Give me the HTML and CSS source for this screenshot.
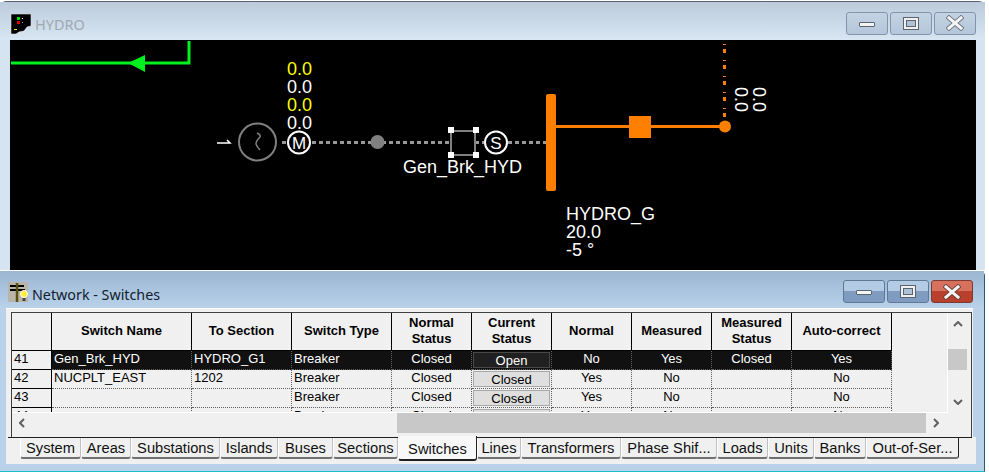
FILE: index.html
```html
<!DOCTYPE html>
<html>

<head>
<title>HYDRO - Network Switches</title>
<link rel="stylesheet" href="styles.css">
</head>

<body>

<!-- one-line window on top: the one line diagram -->
<div class="window diagram-window">
  <div class="title-bar">
    <svg class="title-icon" width="20" height="20" viewBox="0 0 20 20">
      <path d="M0 0H20V12L16 13L13 17L8 18L5 20H0Z" fill="#000" stroke="#fff" stroke-width="0.5"/>
      <rect x="6" y="3" width="3" height="3" fill="#00e000"/>
      <rect x="6" y="7" width="3" height="3" fill="#e00000"/>
      <rect x="11" y="4" width="1" height="1" fill="#fff"/>
      <rect x="11" y="8" width="1" height="1" fill="#888"/>
      <rect x="3" y="15" width="3" height="1" fill="#ffe000"/>
    </svg>
    <span class="title-text title-inactive">HYDRO</span>
    <div class="win-buttons">
      <div class="win-btn"><span class="glyph-min"></span></div>
      <div class="win-btn"><span class="glyph-max"></span></div>
      <div class="win-btn">
        <svg width="18" height="16" viewBox="0 0 18 16"><path d="M2 2L16 14M16 2L2 14" stroke="#6a7480" stroke-width="5.500" stroke-linecap="square" transform="translate(9 8) scale(0.86) translate(-9 -8)"/><path d="M2 2L16 14M16 2L2 14" stroke="#f4f4f4" stroke-width="3.500" stroke-linecap="square" transform="translate(9 8) scale(0.86) translate(-9 -8)"/></svg>
      </div>
    </div>
  </div>
  <svg class="diagram" width="966" height="230" viewBox="10 40 966 230">
    <!-- green feeder -->
    <path d="M11 63H189V41" fill="none" stroke="#00f020" stroke-width="3"/>
    <polygon points="128,63 145,55 145,72" fill="#00f020"/>

    <!-- generator line -->
    <path d="M217 143H230L227 140" fill="none" stroke="#fff" stroke-width="1.500"/>
    <circle cx="257.500" cy="142" r="18.500" fill="none" stroke="#808080" stroke-width="2"/>
    <path d="M257 133Q261 135 260 137Q256 141 256 144Q257 147 260 150" fill="none" stroke="#808080" stroke-width="1.500"/>
    <path d="M282 142.500H288M312 142.500H450M475 142.500H484M508 142.500H546" stroke="#989898" stroke-width="3" stroke-dasharray="4 3" fill="none"/>
    <circle cx="377.500" cy="142" r="7" fill="#808080"/>

    <circle cx="299" cy="142.500" r="11" fill="#000" stroke="#fff" stroke-width="2"/>
    <text class="sym" x="299" y="148.500">M</text>

    <!-- breaker and handles -->
    <rect x="451" y="131" width="24" height="24" fill="#000" stroke="#808080" stroke-width="2"/>
    <rect x="448" y="127" width="6" height="6" fill="#fff"/>
    <rect x="473" y="127" width="6" height="6" fill="#fff"/>
    <rect x="448" y="152" width="6" height="6" fill="#fff"/>
    <rect x="473" y="152" width="6" height="6" fill="#fff"/>

    <circle cx="496" cy="142.500" r="11" fill="#000" stroke="#fff" stroke-width="2"/>
    <text class="sym" x="496" y="148.500">S</text>

    <!-- orange bus -->
    <rect x="546" y="94" width="10" height="97" rx="2" fill="#ff8000"/>
    <path d="M556 126.500H725" stroke="#ff8000" stroke-width="3"/>
    <rect x="629" y="116" width="22" height="22" fill="#ff8000"/>
    <circle cx="725" cy="126.500" r="6" fill="#ff8000"/>
    <path d="M724.500 49V125" stroke="#ff8000" stroke-width="3" stroke-dasharray="4 12"/>
    <path d="M724.500 44V110" stroke="#ff8000" stroke-width="3" stroke-dasharray="1 15"/>

    <text class="dia-text yellow" x="287" y="75">0.0</text>
    <text class="dia-text" x="287" y="93">0.0</text>
    <text class="dia-text yellow" x="287" y="111">0.0</text>
    <text class="dia-text" x="287" y="129">0.0</text>

    <text class="dia-text" transform="translate(735 87) rotate(90)">0.0</text>
    <text class="dia-text" transform="translate(753 87) rotate(90)">0.0</text>

    <text class="dia-text" x="403" y="173">Gen_Brk_HYD</text>
    <text class="dia-text" x="566" y="220">HYDRO_G</text>
    <text class="dia-text" x="566" y="238">20.0</text>
    <text class="dia-text" x="566" y="256">-5 °</text>
  </svg>
</div>

<div class="window switches-window">
  <div class="title-bar">
    <svg class="title-icon" width="20" height="20" viewBox="0 0 20 20">
      <rect width="20" height="20" fill="#b8b4a8"/>
      <path d="M2 4H16M2 8H17" stroke="#000" stroke-width="2"/>
      <path d="M9 1V20" stroke="#5c5010" stroke-width="2.500"/>
      <circle cx="16" cy="12" r="3.500" fill="#ffee33" stroke="#fff"/>
      <rect x="14.500" y="16" width="3" height="3" fill="#444"/>
    </svg>
    <span class="title-text title-network">Network - Switches</span>
    <div class="win-buttons">
      <div class="win-btn"><span class="glyph-min"></span></div>
      <div class="win-btn"><span class="glyph-max"></span></div>
      <div class="win-btn win-close">
        <svg width="18" height="16" viewBox="0 0 18 16"><path d="M2 2L16 14M16 2L2 14" stroke="#6a4038" stroke-width="5.500" stroke-linecap="square" transform="translate(9 8) scale(0.86) translate(-9 -8)"/><path d="M2 2L16 14M16 2L2 14" stroke="#f4f4f4" stroke-width="3.500" stroke-linecap="square" transform="translate(9 8) scale(0.86) translate(-9 -8)"/></svg>
      </div>
    </div>
  </div>

  <div class="panel">
    <div class="grid-section">
      <div class="grid-frame">
        <div class="grid-row">
          <div class="grid-view">
            <table class="grid">
              <colgroup>
                <col class="c-40"><col class="c-140"><col class="c-100"><col class="c-100"><col class="c-80">
                <col class="c-80"><col class="c-80"><col class="c-80"><col class="c-80"><col class="c-100">
              </colgroup>
              <tr class="head">
                <th></th>
                <th>Switch Name</th>
                <th>To Section</th>
                <th>Switch Type</th>
                <th>Normal<br>Status</th>
                <th>Current<br>Status</th>
                <th>Normal</th>
                <th>Measured</th>
                <th>Measured<br>Status</th>
                <th>Auto-correct</th>
              </tr>
              <tr class="selected">
                <td class="row-num">41</td><td>Gen_Brk_HYD</td><td>HYDRO_G1</td><td>Breaker</td>
                <td class="mid">Closed</td><td class="btn-cell"><div class="cell-btn">Open</div></td>
                <td class="mid">No</td><td class="mid">Yes</td><td class="mid">Closed</td><td class="mid">Yes</td>
              </tr>
              <tr>
                <td class="row-num">42</td><td>NUCPLT_EAST</td><td>1202</td><td>Breaker</td>
                <td class="mid">Closed</td><td class="btn-cell"><div class="cell-btn">Closed</div></td>
                <td class="mid">Yes</td><td class="mid">No</td><td class="mid"></td><td class="mid">No</td>
              </tr>
              <tr>
                <td class="row-num">43</td><td></td><td></td><td>Breaker</td>
                <td class="mid">Closed</td><td class="btn-cell"><div class="cell-btn">Closed</div></td>
                <td class="mid">Yes</td><td class="mid">No</td><td class="mid"></td><td class="mid">No</td>
              </tr>
              <tr>
                <td class="row-num">44</td><td></td><td></td><td>Breaker</td>
                <td class="mid">Closed</td><td class="btn-cell"><div class="cell-btn">Closed</div></td>
                <td class="mid">Yes</td><td class="mid">No</td><td class="mid"></td><td class="mid">No</td>
              </tr>
            </table>
          </div>
          <div class="v-scroll">
            <svg width="10" height="6" viewBox="0 0 10 6"><path d="M1 5L5 1L9 5" fill="none" stroke="#606060" stroke-width="2"/></svg>
            <div class="v-thumb"></div>
            <svg width="10" height="6" viewBox="0 0 10 6"><path d="M1 1L5 5L9 1" fill="none" stroke="#606060" stroke-width="2"/></svg>
          </div>
        </div>
        <div class="h-scroll">
          <svg width="6" height="10" viewBox="0 0 6 10"><path d="M5 1L1 5L5 9" fill="none" stroke="#606060" stroke-width="2"/></svg>
          <div class="h-thumb"></div>
          <svg width="6" height="10" viewBox="0 0 6 10"><path d="M1 1L5 5L1 9" fill="none" stroke="#606060" stroke-width="2"/></svg>
        </div>
      </div>
    </div>

    <div class="tabs">
      <div class="tab t-61">System</div>
      <div class="tab t-50">Areas</div>
      <div class="tab t-89">Substations</div>
      <div class="tab t-58">Islands</div>
      <div class="tab t-55">Buses</div>
      <div class="tab t-65">Sections</div>
      <div class="tab tab-active t-79">Switches</div>
      <div class="tab t-44">Lines</div>
      <div class="tab t-100">Transformers</div>
      <div class="tab t-96">Phase Shif...</div>
      <div class="tab t-51">Loads</div>
      <div class="tab t-46">Units</div>
      <div class="tab t-52">Banks</div>
      <div class="tab t-93">Out-of-Ser...</div>
    </div>
  </div>
</div>

</body>

</html>
```

FILE: styles.css
```css
html, body {
	margin: 0;
	height: 100%;
}

body {
	position: relative;
	width: 989px;
	height: 475px;
	overflow: hidden;
	background: #fff;
	font-family: "Liberation Sans", Arial, sans-serif;
}

/* windows sit on a desktop, so these two are placed */
.window {
	position: absolute;
	left: 0;
	width: 985px;
	box-sizing: border-box;
	border-radius: 6px 6px 0 0;
}

.diagram-window {
	top: 1px;
	height: 269px;
	background: #d6e4f1;
	border-top: 1px solid #5a626c;
}

.diagram-window .title-bar {
	height: 38px;
	background: linear-gradient(#bccbdb, #d8e6f3);
	padding: 5px 9px 0 11px;
}

.switches-window {
	top: 270px;
	height: 202px;
	background: #b9d2ea;
	border-top: 1px solid #fff;
	border-right: 1px solid #2a5a70;
	border-bottom: 1px solid #18c0d0;
}

.switches-window .title-bar {
	height: 37px;
	background: linear-gradient(#9bb5d2, #b9d2ea);
	padding: 5px 11px 0 8px;
}

.title-bar {
	display: flex;
	align-items: center;
	box-sizing: border-box;
}

.title-icon {
	flex: none;
	margin-right: 4px;
}

.title-text {
	font-family: "Noto Sans", sans-serif;
	font-size: 14px;
	color: #10202e;
}

.title-inactive {
	font-size: 14.500px;
	color: #a0a8b0;
}

.title-network {
	font-size: 14.300px;
	margin-top: 4px;
}

.win-buttons {
	display: flex;
	gap: 2px;
	margin-left: auto;
	margin-top: -1px;
}

.win-btn {
	display: flex;
	align-items: center;
	justify-content: center;
	width: 42px;
	height: 23px;
	box-sizing: border-box;
	border: 1px solid #8494ac;
	border-radius: 3px;
	background: linear-gradient(#c4d3e3, #b4c6da);
}

.switches-window .win-btn {
	background: linear-gradient(#b4cbe4 50%, #7f9cc0 50%);
	border-color: #5f7894;
}

.switches-window .win-close {
	background: linear-gradient(#d8705e 50%, #b8402c 50%);
	border-color: #7c3a30;
}

.glyph-min {
	display: block;
	width: 16px;
	height: 5px;
	margin-top: 2px;
	box-sizing: border-box;
	background: #f4f4f4;
	border: 1px solid #5a6470;
	border-radius: 1px;
}

.glyph-max {
	display: block;
	width: 16px;
	height: 13px;
	box-sizing: border-box;
	background: #f0f0f0;
	border: 1px solid #5a6470;
	box-shadow: inset 0 0 0 2px #f0f0f0, inset 0 0 0 3px #5a6470, inset 0 0 0 9px #b0c2d6;
}

/* diagram */
.diagram {
	display: block;
	margin-left: 10px;
	background: #000;
}

.dia-text {
	font-family: "Liberation Sans", Arial, sans-serif;
	font-size: 18px;
	fill: #fff;
}

.yellow {
	fill: #ffff00;
}

.sym {
	font-family: "Liberation Sans", Arial, sans-serif;
	font-size: 17px;
	fill: #fff;
	text-anchor: middle;
}

/* switches list */
.panel {
	margin-left: 6px;
	width: 970px;
	height: 156px;
}

.grid-section {
	width: 967px;
	height: 129px;
	box-sizing: border-box;
	padding-top: 3px;
	background: #f0f0f0;
	border-top: 1px solid #fff;
}

.grid-frame {
	margin-left: 5px;
	width: 961px;
	height: 125px;
	box-sizing: border-box;
	border-left: 1px solid #404040;
	border-right: 1px solid #404040;
	border-top: 1px solid #404040;
}

.grid-row {
	display: flex;
	height: 100px;
}

.grid-view {
	width: 936px;
	height: 100px;
	box-sizing: border-box;
	overflow: hidden;
	border-right: 1px solid #fff;
	border-bottom: 1px solid #fff;
}

.grid {
	table-layout: fixed;
	width: 880px;
	border-collapse: separate;
	border-spacing: 0;
	font-size: 13px;
	color: #000;
}

.c-40 { width: 40px; }
.c-80 { width: 80px; }
.c-100 { width: 100px; }
.c-140 { width: 140px; }

.grid th {
	height: 38px;
	box-sizing: border-box;
	padding: 0 0 1px;
	font-weight: bold;
	line-height: 16px;
	border-right: 1px solid #000;
	border-bottom: 1px solid #000;
}

.grid td {
	height: 19px;
	box-sizing: border-box;
	padding: 0 2px 2px;
	line-height: 16px;
	white-space: nowrap;
	border-right: 1px dotted #606060;
	border-bottom: 1px dotted #606060;
}

.grid td.row-num {
	border-right: 1px solid #000;
	border-bottom: 1px solid #000;
	background: #f0f0f0;
	color: #000;
}

.grid td.mid {
	text-align: center;
}

.selected td {
	background: #111;
	color: #fff;
}

.grid td.btn-cell {
	padding: 1px;
}

.cell-btn {
	height: 16px;
	box-sizing: border-box;
	line-height: 15px;
	text-align: center;
	background: #dfdfdf;
	border: 1px solid #a8a8a8;
}

.selected .cell-btn {
	background: #202020;
	border-color: #484848;
	color: #fff;
}

.v-scroll {
	display: flex;
	flex-direction: column;
	align-items: center;
	justify-content: space-between;
	flex: none;
	width: 23px;
	box-sizing: border-box;
	padding: 8px 4px 8px 0;
}

.v-thumb {
	width: 100%;
	height: 21px;
	margin-top: 13px;
	margin-bottom: 20px;
	background: #c8c8c8;
}

.h-scroll {
	display: flex;
	align-items: center;
	height: 20px;
	box-sizing: border-box;
	padding-left: 7px;
}

.h-thumb {
	width: 529px;
	height: 20px;
	margin-left: 372px;
	margin-right: 7px;
	background: #c8c8c8;
}

/* tab strip */
.tabs {
	display: flex;
	align-items: flex-start;
	height: 27px;
	box-sizing: border-box;
	padding-left: 14px;
	background: #f0f0f0;
	background-image: linear-gradient(#202020, #202020);
	background-repeat: no-repeat;
	background-position: 2px 0;
	background-size: 964px 1px;
}

.tab {
	height: 21px;
	margin-top: 1px;
	box-sizing: border-box;
	text-align: center;
	font-size: 14.700px;
	line-height: 21px;
	color: #101010;
	background: #f0f0f0;
	border-right: 1px solid #c0c0c0;
	border-left: 1px solid #fff;
	border-bottom: 2px solid #707070;
	border-radius: 0 0 3px 3px;
}

.tab-active {
	height: 25px;
	margin-top: -1px;
	line-height: 27px;
	background: #f8f8f8;
	border-right: 1px solid #202020;
	border-bottom: 2px solid #202020;
}

.t-44 { width: 44px; }
.t-46 { width: 46px; }
.t-50 { width: 50px; }
.t-51 { width: 51px; }
.t-52 { width: 52px; }
.t-55 { width: 55px; }
.t-58 { width: 58px; }
.t-61 { width: 61px; }
.t-65 { width: 65px; }
.t-79 { width: 79px; }
.t-89 { width: 89px; }
.t-93 { width: 93px; border-right-color: #202020; }
.t-96 { width: 96px; }
.t-100 { width: 100px; }
```
